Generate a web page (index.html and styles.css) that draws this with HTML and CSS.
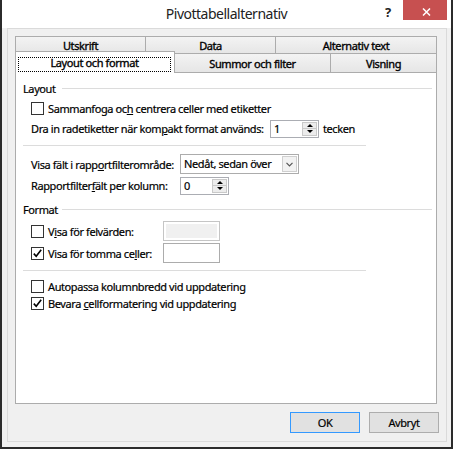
FILE: index.html
```html
<!DOCTYPE html>
<html lang="sv">
<head>
  <meta charset="UTF-8">
  <title>Pivottabellalternativ</title>
  <meta name="viewport" content="width=device-width, initial-scale=1.0">
  <link rel="stylesheet" href="styles.css">
</head>
<body>
  <div class="window">
    <div class="titlebar">
      <span class="title">Pivottabellalternativ</span>
      <div class="caption">
        <span class="help">?</span>
        <span class="close">
          <svg width="9" height="8" viewBox="0 0 9 8"><path d="M1 0.5 L8 7.5 M8 0.5 L1 7.5" stroke="#fff" stroke-width="1.5" fill="none"/></svg>
        </span>
      </div>
    </div>

    <div class="client">
      <div class="tab-row back">
        <div class="tab tab-print">Utskrift</div>
        <div class="tab tab-data">Data</div>
        <div class="tab tab-alt">Alternativ text</div>
      </div>
      <div class="tab-row front">
        <div class="tab tab-layout active"><span class="focus">Layout och format</span></div>
        <div class="tab tab-totals">Summor och filter</div>
        <div class="tab tab-view">Visning</div>
      </div>

      <div class="panel">
        <div class="group-head"><span>Layout</span></div>

        <div class="row r1">
          <span class="check"></span>
          <span>Sammanfoga oc<u>h</u> centrera celler med etiketter</span>
        </div>
        <div class="row r2">
          <span class="label indent">Dra in radetiketter när kom<u>p</u>akt format används:</span>
          <div class="spin"><span class="val">1</span><span class="arrows"><span class="up"></span><span class="down"></span></span></div>
          <span class="after">tecken</span>
        </div>

        <div class="sep sep1"></div>

        <div class="row r3">
          <span class="label wide">Visa fält i rapp<u>o</u>rtfilterområde:</span>
          <div class="select">
            <span class="val">Nedåt, sedan över</span>
            <span class="drop"><svg width="7" height="5" viewBox="0 0 7 5"><path d="M0.5 0.8 L3.5 3.8 L6.5 0.8" stroke="#555" stroke-width="1.2" fill="none"/></svg></span>
          </div>
        </div>
        <div class="row r4">
          <span class="label wide">Rapportfilter<u>f</u>ält per kolumn:</span>
          <div class="spin"><span class="val">0</span><span class="arrows"><span class="up"></span><span class="down"></span></span></div>
        </div>

        <div class="group-head head2"><span>Format</span></div>

        <div class="row r5">
          <span class="check"></span>
          <span class="label short">V<u>i</u>sa för felvärden:</span>
          <span class="field disabled"></span>
        </div>
        <div class="row r6">
          <span class="check checked"><svg width="11" height="11" viewBox="0 0 11 11"><path d="M1.8 5.6 L4.2 8.2 L9.2 1.8" stroke="#000" stroke-width="1.6" fill="none"/></svg></span>
          <span class="label short">Visa för tomma ce<u>l</u>ler:</span>
          <span class="field"></span>
        </div>

        <div class="sep sep2"></div>

        <div class="row r7">
          <span class="check"></span>
          <span>Autopassa kolumnbredd vid uppdaterin<u>g</u></span>
        </div>
        <div class="row r8">
          <span class="check checked"><svg width="11" height="11" viewBox="0 0 11 11"><path d="M1.8 5.6 L4.2 8.2 L9.2 1.8" stroke="#000" stroke-width="1.6" fill="none"/></svg></span>
          <span>Bevara <u>c</u>ellformatering vid uppdatering</span>
        </div>
      </div>

      <div class="actions">
        <button class="btn default">OK</button>
        <button class="btn">Avbryt</button>
      </div>
    </div>
  </div>
</body>
</html>
```

FILE: styles.css
```css
* { box-sizing: border-box; }
html, body { margin: 0; }
body { font-family: "Noto Sans", "DejaVu Sans", sans-serif; font-size: 11px; letter-spacing: -0.4px; color: #000; background: #fff; -webkit-text-stroke: 0.2px #000; }
u { text-decoration: underline; text-underline-offset: 1px; }

.window { width: 453px; height: 449px; border: 2px solid #2b2b2b; border-top: 0; background: #f0f0f0; display: flex; flex-direction: column; }

/* title bar */
.titlebar { position: relative; height: 28px; background: #fff; text-align: center; -webkit-text-stroke: 0; }
.title { font-size: 14px; letter-spacing: -0.5px; line-height: 28px; color: #222; }
.caption { position: absolute; top: 0; right: 4px; display: flex; }
.help { width: 30px; height: 20px; font-size: 13px; font-weight: bold; line-height: 24px; color: #222; text-align: center; }
.close { width: 44px; height: 20px; background: #c75050; display: flex; justify-content: center; padding-top: 8px; padding-left: 2px; }

.client { flex: 1; margin: 0 4px 5px 5px; border: 1px solid #dadada; padding: 7px 9px 0 7px; display: flex; flex-direction: column; }

/* tabs */
.tab-row { display: flex; }
.tab { border: 1px solid #acacac; background: linear-gradient(#f3f3f3, #e6e6e6); text-align: center; margin-left: -1px; white-space: nowrap; -webkit-text-stroke: 0.35px #000; }
.tab:first-child { margin-left: 0; }
.back .tab { height: 18px; padding-top: 1px; line-height: 15px; }
.front { margin-top: -3px; align-items: flex-end; }
.front .tab { height: 19px; border-bottom: 0; padding-top: 2px; line-height: 16px; }
.front .tab.active { height: 22px; margin-bottom: -1px; padding: 0; background: #fff; position: relative; z-index: 1; }
.tab-print, .tab-data { width: 131px; }
.tab-alt { width: 162px; }
.tab-layout { width: 160px; }
.tab-totals { width: 157px; }
.tab-view { width: 107px; }
.focus { display: block; margin: 5px 3px 0 2px; height: 15px; border: 1px dotted #000; line-height: 9px; padding-bottom: 4px; }

/* page */
.panel { height: 332px; border: 1px solid #acacac; background: #fff; padding: 7px 4px 0 7px; }
.group-head { display: flex; align-items: center; height: 16px; }
.group-head span { width: 39px; }
.group-head::after { content: ""; flex: 1; border-top: 1px solid #dcdcdc; }
.head2 { margin-top: 6px; }
.sep { width: 343px; border-top: 1px solid #dcdcdc; }
.sep1, .sep2 { margin-top: 7px; }

.row { display: flex; align-items: center; padding-left: 8px; white-space: nowrap; }
.r1 { height: 18px; margin-top: 3px; }
.r2 { height: 19px; margin-top: 2px; }
.r3 { height: 20px; margin-top: 8px; }
.r4 { height: 19px; margin-top: 2px; }
.r5 { height: 20px; margin-top: 4px; }
.r6 { height: 20px; margin-top: 2px; }
.r7 { height: 17px; margin-top: 7px; }
.r8 { height: 17px; }

.label.indent { width: 239px; }
.label.wide { width: 149px; }
.label.short { width: 115px; }
.after { margin-left: 4px; }

.check { flex: none; width: 13px; height: 13px; border: 1px solid #333; background: #fff; margin-right: 4px; display: flex; }

.spin { display: flex; width: 49px; height: 18px; border: 1px solid #abadb3; background: #fff; }
.spin .val { flex: 1; padding-left: 3px; line-height: 16px; }
.spin .arrows { width: 15px; margin: 1px 1px 1px 0; border: 1px solid #c9c9c9; display: flex; flex-direction: column; }
.spin .up, .spin .down { flex: 1; display: flex; align-items: center; justify-content: center; background: #ececec; }
.spin .up { border-bottom: 1px solid #c9c9c9; }
.spin .up::after { content: ""; border: 3px solid transparent; border-top: 0; border-bottom: 3px solid #000; }
.spin .down::after { content: ""; border: 3px solid transparent; border-bottom: 0; border-top: 3px solid #000; }

.select { display: flex; width: 119px; height: 20px; border: 1px solid #acacac; background: #fff; }
.select .val { flex: 1; padding-left: 3px; line-height: 18px; }
.select .drop { width: 15px; margin: 1px; border: 1px solid #cfcfcf; background: #f2f2f2; display: flex; align-items: center; justify-content: center; }

.field { width: 57px; height: 20px; border: 1px solid #acacac; background: #fff; }
.field.disabled { background: #f0f0f0; box-shadow: inset 0 0 0 2px #fff; border-color: #c5c5c5; }

/* buttons */
.actions { display: flex; justify-content: flex-end; gap: 9px; margin-top: 8px; margin-right: -2px; }
.btn { width: 70px; height: 21px; padding: 0; border: 1px solid #adadad; background: #e1e1e1; font: inherit; letter-spacing: inherit; color: #000; -webkit-text-stroke: inherit; }
.btn.default { border-color: #3399ff; }
```
